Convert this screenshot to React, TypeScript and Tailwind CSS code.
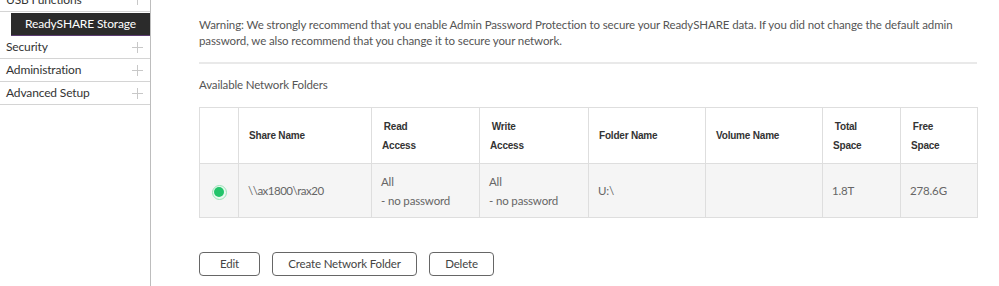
const navItems = ["Security", "Administration", "Advanced Setup"];

const headers: { label: string[]; w: string }[] = [
  { label: [], w: "w-[39px]" },
  { label: ["Share Name"], w: "w-[133px]" },
  { label: ["\u2009Read", "Access"], w: "w-[108px]" },
  { label: ["\u2009Write", "Access"], w: "w-[109px]" },
  { label: ["Folder Name"], w: "w-[117px]" },
  { label: ["Volume Name"], w: "w-[117px]" },
  { label: ["\u2009Total", "Space"], w: "w-[78px]" },
  { label: ["\u2009Free", "Space"], w: "w-[77px]" },
];

function Plus() {
  return (
    <svg width="11" height="11" viewBox="0 0 11 11" className="text-[#c8c8c8]">
      <path d="M5.5 0v11M0 5.5h11" stroke="currentColor" strokeWidth="1" />
    </svg>
  );
}

export default function App() {
  return (
    <div className="flex h-[286px] w-[999px] overflow-hidden bg-white font-['Lato',sans-serif] tracking-[-0.15px]">
      {/* side menu */}
      <div className="w-[151px] shrink-0 border-r border-[#bdbdbd]">
        <div className="-mt-[12px] flex h-[24px] items-center justify-between border-b border-[#d4d4d4] pl-[6px] pr-[7px] text-[12px] text-[#333]">
          <span>USB Functions</span>
          <Plus />
        </div>
        <div className="ml-[11px] mt-px flex h-[23px] items-center border-b border-[#5b3b70] bg-[#2b2b2b] pl-[14px] text-[12px] text-white">
          ReadySHARE Storage
        </div>
        {navItems.map((item) => (
          <div
            key={item}
            className="flex h-[23px] items-center justify-between border-b border-[#d4d4d4] pl-[6px] pr-[7px] text-[12px] text-[#333]"
          >
            <span>{item}</span>
            <Plus />
          </div>
        ))}
      </div>

      {/* main */}
      <div className="pl-[48px] pt-[17px]">
        <p className="w-[778px] text-[11.5px] leading-[16px] tracking-[-0.1px] text-[#555]">
          Warning: We strongly recommend that you enable Admin Password Protection to secure your ReadySHARE data. If
          you did not change the default admin password, we also recommend that you change it to secure your network.
        </p>
        <div className="mt-[13px] h-[2px] w-[778px] bg-[#e9e9e9]" />
        <div className="mt-[13px] text-[11.5px] leading-[16px] text-[#555]">Available Network Folders</div>

        <table className="mt-[14px] w-[778px] table-fixed border-collapse border border-[#dedede]">
          <thead>
            <tr className="h-[56px] bg-white">
              {headers.map((h, i) => (
                <th
                  key={i}
                  className={`${h.w} border border-[#dedede] pl-[10px] text-left align-middle font-['Liberation_Sans',sans-serif] text-[10px] font-bold leading-[19px] tracking-[-0.2px] text-[#333]`}
                >
                  {h.label.map((l) => (
                    <div key={l}>{l}</div>
                  ))}
                </th>
              ))}
            </tr>
          </thead>
          <tbody>
            <tr className="h-[54px] bg-[#f5f5f5] text-[11.5px] leading-[19px] text-[#666]">
              <td className="border border-[#dedede] text-center">
                <span className="inline-flex h-[15px] w-[15px] items-center justify-center rounded-full border border-[#9be3b8] bg-[#e8f9ef] align-middle">
                  <span className="h-[10px] w-[10px] rounded-full bg-[#22c46a]" />
                </span>
              </td>
              <td className="border border-[#dedede] pl-[9px] tracking-[-0.5px]">\\ax1800\rax20</td>
              <td className="border border-[#dedede] pl-[9px]">
                <div>All</div>
                <div>- no password</div>
              </td>
              <td className="border border-[#dedede] pl-[9px]">
                <div>All</div>
                <div>- no password</div>
              </td>
              <td className="border border-[#dedede] pl-[9px]">U:\</td>
              <td className="border border-[#dedede] pl-[9px]"></td>
              <td className="border border-[#dedede] pl-[9px]">1.8T</td>
              <td className="border border-[#dedede] pl-[9px]">278.6G</td>
            </tr>
          </tbody>
        </table>

        <div className="mt-[34px] flex gap-[12px] text-[11.5px] text-[#444]">
          <button className="h-[24px] w-[61px] rounded-[4px] border border-[#666] bg-white">Edit</button>
          <button className="h-[24px] w-[145px] rounded-[4px] border border-[#666] bg-white">Create Network Folder</button>
          <button className="h-[24px] w-[65px] rounded-[4px] border border-[#666] bg-white">Delete</button>
        </div>
      </div>
    </div>
  );
}
